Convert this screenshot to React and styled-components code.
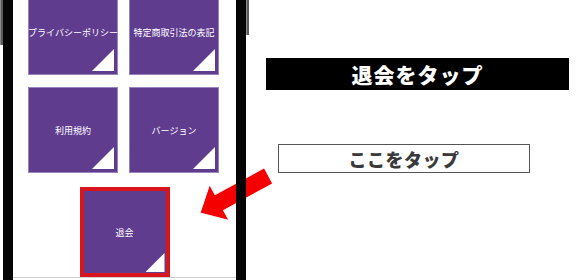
import React from 'react'
import styled, { createGlobalStyle } from 'styled-components'

const GlobalStyle = createGlobalStyle`
  body {
    margin: 0;
    background: #fff;
    font-family: "Noto Sans CJK JP", "Noto Sans", sans-serif;
  }
`

const Page = styled.div`
  position: relative;
  display: flex;
  width: 580px;
  height: 280px;
  overflow: hidden;
  background: #fff;
`

const Phone = styled.div`
  position: relative;
  flex: none;
  width: 243px;
  height: 280px;
  margin-left: 3px;
  box-sizing: border-box;
  padding: 0 10px;

  &::after {
    content: '';
    position: absolute;
    inset: 0;
    border-left: 10px solid #050505;
    border-right: 10px solid #050505;
    z-index: 3;
    pointer-events: none;
  }
`

const SideButton = styled.div`
  position: absolute;
  top: 0;
  ${(p) => (p.$side === 'left' ? 'left: -3px;' : 'right: -3px;')}
  width: 3px;
  height: ${(p) => p.$h}px;
  background: #5a5a5a;
  border-left: 1px solid #8a8a8a;
  box-sizing: border-box;
`

const Screen = styled.div`
  height: 277px;
  border-bottom: 1px solid #cfcfcf;
  display: flex;
  flex-direction: column;
  overflow: hidden;
`

const Grid = styled.div`
  display: grid;
  grid-template-columns: 90px 90px;
  column-gap: 11px;
  row-gap: 12px;
  margin-top: -11px;
  padding-left: 15px;
`

const Tile = styled.div`
  position: relative;
  box-sizing: border-box;
  width: ${(p) => p.$w || 90}px;
  height: ${(p) => p.$h || 86}px;
  background: #603c8f;
  border: ${(p) => (p.$plain ? 'none' : '1px solid #9a84bd')};
  display: flex;
  align-items: center;
  justify-content: center;
  color: #fff;
  font-size: 9px;
  line-height: 1;
  white-space: nowrap;

  &::after {
    content: '';
    position: absolute;
    right: ${(p) => p.$inset ?? 3}px;
    bottom: ${(p) => p.$inset ?? 3}px;
    width: ${(p) => p.$tri || 22}px;
    height: ${(p) => p.$tri || 22}px;
    background: #fff;
    clip-path: polygon(100% 0, 100% 100%, 0 100%);
  }
`

const Highlight = styled.div`
  align-self: center;
  margin-top: 14px;
  width: 90px;
  height: 90px;
  box-sizing: border-box;
  border: 4px solid #d8141c;
`

const Side = styled.div`
  display: flex;
  flex-direction: column;
  align-items: flex-start;
  padding-top: 58px;
  padding-left: 20px;
`

const Banner = styled.div`
  width: 303px;
  height: 32px;
  background: #000;
  color: #fff;
  font-size: 21px;
  font-weight: 900;
  display: flex;
  align-items: center;
  justify-content: center;
  letter-spacing: 1px;
`

const TapBox = styled.div`
  margin-top: 54px;
  margin-left: 12px;
  width: 252px;
  height: 29px;
  box-sizing: border-box;
  border: 1px solid #555;
  color: #3a3a3a;
  font-size: 18px;
  font-weight: 900;
  display: flex;
  align-items: center;
  justify-content: center;
  letter-spacing: 0.5px;
`

const Arrow = styled.svg`
  position: absolute;
  left: 190px;
  top: 160px;
  z-index: 2;
`

const tiles = ['プライバシーポリシー', '特定商取引法の表記', '利用規約', 'バージョン']

export default function App() {
  return (
    <>
      <GlobalStyle />
      <Page>
        <Phone>
          <SideButton $side="left" $h={45} />
          <SideButton $side="right" $h={35} />
          <Screen>
            <Grid>
              {tiles.map((t) => (
                <Tile key={t}>{t}</Tile>
              ))}
            </Grid>
            <Highlight>
              <Tile $w={82} $h={82} $plain $tri={19} $inset={1}>退会</Tile>
            </Highlight>
          </Screen>
        </Phone>
        <Side>
          <Banner>退会をタップ</Banner>
          <TapBox>ここをタップ</TapBox>
        </Side>
        <Arrow width="100" height="70" viewBox="0 0 100 70">
          <g transform="translate(10 53) rotate(-28.5)">
            <polygon
              points="0,0 22,-20.5 22,-9 78,-9 78,9 22,9 22,20.5"
              fill="#f40000"
              stroke="#fff"
              strokeWidth="1"
            />
          </g>
        </Arrow>
      </Page>
    </>
  )
}
